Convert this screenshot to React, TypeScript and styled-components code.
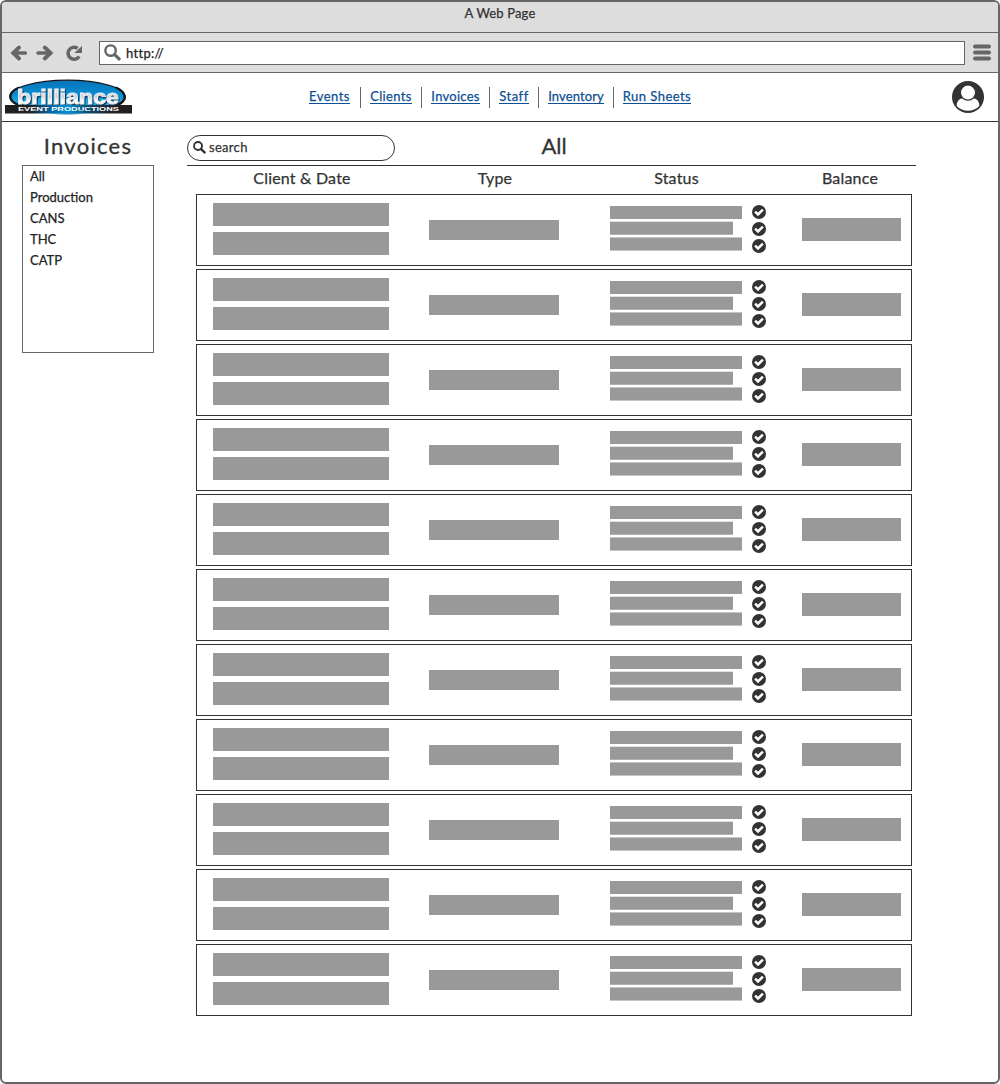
import React from "react";
import styled, { createGlobalStyle } from "styled-components";

const GlobalStyle = createGlobalStyle`
  *, *::before, *::after { box-sizing: border-box; }
  body { margin: 0; background: #fff; }
`;

const Window = styled.div`
  width: 1000px;
  height: 1084px;
  display: flex;
  flex-direction: column;
  border: 2px solid #666;
  border-radius: 6px;
  overflow: hidden;
  background: #fff;
  color: #333;
  font-family: Lato, "Open Sans", sans-serif;
  font-size: 13px;
`;

const TitleBar = styled.div`
  height: 31px;
  flex: none;
  display: flex;
  justify-content: center;
  background: #ddd;
  border-bottom: 1px solid #666;
  line-height: 22px;
`;

const Toolbar = styled.div`
  height: 40px;
  flex: none;
  display: flex;
  align-items: center;
  padding: 0 7px 0 8px;
  background: #ddd;
  border-bottom: 1px solid #666;
`;

const Glyph = styled.svg<{ $gap?: number }>`
  display: block;
  flex: none;
  margin-right: ${(p) => p.$gap ?? 0}px;
`;

const AddressBar = styled.div`
  flex: 1;
  height: 24px;
  display: flex;
  align-items: center;
  margin-right: 8px;
  padding-left: 4px;
  border: 1px solid #666;
  background: #fff;
  color: #222;
`;

const Label = styled.span<{ $size?: number; $spacing?: number }>`
  font-size: ${(p) => p.$size ?? 13}px;
  letter-spacing: ${(p) => p.$spacing ?? 0}px;
  white-space: nowrap;
  -webkit-text-stroke: 0.25px currentColor;
`;

const Header = styled.header`
  height: 49px;
  flex: none;
  display: grid;
  grid-template-columns: 297px 1fr 46px;
  border-bottom: 1px solid #333;
`;

const LogoSlot = styled.div`
  padding: 6px 0 0 3px;
`;

const Nav = styled.nav`
  display: flex;
  padding-top: 14px;
`;

const NavItem = styled.div<{ $width: number }>`
  width: ${(p) => p.$width}px;
  height: 21px;
  display: flex;
  justify-content: center;
  border-right: 1px solid #666;
  &:last-child { border-right: 0; }
`;

const NavLink = styled.a<{ $spacing: number }>`
  height: 17px;
  line-height: 19px;
  border-bottom: 1px solid #0c4f92;
  color: #0c4f92;
  letter-spacing: ${(p) => p.$spacing}px;
  white-space: nowrap;
  text-decoration: none;
  -webkit-text-stroke: 0.25px currentColor;
`;

const Body = styled.main`
  flex: 1;
  display: grid;
  grid-template-columns: 132px 729px;
  column-gap: 33px;
  padding: 13px 0 0 20px;
  align-items: start;
`;

const SectionTitle = styled.h1<{ $spacing: number }>`
  height: 30px;
  margin: 0;
  line-height: 21px;
  font-size: 22px;
  font-weight: 400;
  text-align: center;
  letter-spacing: ${(p) => p.$spacing}px;
  -webkit-text-stroke: 0.3px currentColor;
`;

const FilterList = styled.ul`
  height: 188px;
  margin: 0;
  padding: 0 7px;
  list-style: none;
  border: 1px solid #666;
  color: #222;
`;

const FilterItem = styled.li`
  height: 21px;
  line-height: 21px;
`;

const ListHeader = styled.div`
  height: 31px;
  display: grid;
  grid-template-columns: 208px 318px 1fr;
  border-bottom: 1px solid #333;
`;

const Search = styled.div`
  height: 26px;
  display: flex;
  align-items: center;
  gap: 3px;
  padding: 0 0 2px 5px;
  border: 1px solid #333;
  border-radius: 13px;
`;

const Columns = styled.div`
  height: 28px;
  display: grid;
  grid-template-columns: 230px 156px 207px 1fr;
  line-height: 23px;
  text-align: center;
  & > :last-child { padding-left: 4px; }
`;

const Rows = styled.div`
  display: flex;
  flex-direction: column;
  gap: 3px;
  padding: 0 4px 0 9px;
`;

const InvoiceRow = styled.div`
  height: 72px;
  display: flex;
  padding-left: 16px;
  border: 1px solid #333;
`;

const Stack = styled.div<{ $top: number; $left?: number; $gap?: number }>`
  display: flex;
  flex-direction: column;
  gap: ${(p) => p.$gap ?? 0}px;
  margin-left: ${(p) => p.$left ?? 0}px;
  padding-top: ${(p) => p.$top}px;
`;

const Bar = styled.div<{ $w: number; $h: number }>`
  width: ${(p) => p.$w}px;
  height: ${(p) => p.$h}px;
  background: #999;
`;

const SoftBar = styled(Bar)<{ $top: string; $bottom: string }>`
  border-top: 1px solid ${(p) => p.$top};
  border-bottom: 1px solid ${(p) => p.$bottom};
`;

const LogoName = styled.text`
  font: 700 17px "Liberation Sans", sans-serif;
  filter: drop-shadow(1px 1px 0 #17334f);
`;

const LogoTagline = styled.text`
  font: 700 6px "Liberation Sans", sans-serif;
`;

const Logo = () => (
  <Glyph width="128" height="36" viewBox="0 0 128 36">
    <defs>
      <linearGradient id="disc" x1="0" y1="0" x2="0" y2="1">
        <stop offset="0" stopColor="#0872b8" />
        <stop offset="0.45" stopColor="#0790d2" />
        <stop offset="0.8" stopColor="#24b5ed" />
        <stop offset="1" stopColor="#0784c5" />
      </linearGradient>
      <linearGradient id="strip" x1="0" x2="1">
        <stop offset="0.2" stopColor="#211e22" />
        <stop offset="0.34" stopColor="#076096" />
        <stop offset="0.5" stopColor="#0090d4" />
        <stop offset="0.66" stopColor="#0f4a70" />
        <stop offset="0.84" stopColor="#211e22" />
      </linearGradient>
      <linearGradient id="chrome" x1="0" y1="0" x2="0" y2="1">
        <stop offset="0" stopColor="#fff" />
        <stop offset="0.5" stopColor="#c9cfda" />
        <stop offset="0.7" stopColor="#fff" />
        <stop offset="1" stopColor="#e0e4ea" />
      </linearGradient>
    </defs>
    <ellipse cx="62.5" cy="17.5" rx="57.5" ry="16.3" fill="url(#disc)" stroke="#15151b" strokeWidth="1.2" />
    <path d="M14 8.5Q4 13 5.5 19Q7 24 14 26M111 8.5Q121 13 119.5 20Q117 25 110 27" fill="none" stroke="#15151b" strokeWidth="2.4" />
    <g transform="translate(0 -6.2) scale(1 1.24)">
      <LogoName x="12" y="25" textLength="102" lengthAdjust="spacingAndGlyphs" fill="url(#chrome)" stroke="#eef0f4" strokeWidth="0.8">brilliance</LogoName>
    </g>
    <rect x="0" y="26" width="127" height="8.5" fill="url(#strip)" />
    <LogoTagline x="13" y="32.4" textLength="101" lengthAdjust="spacingAndGlyphs" fill="#fff">EVENT PRODUCTIONS</LogoTagline>
    <path d="M43 34.5Q62 36.5 82 34.5Z" fill="#047ebd" />
  </Glyph>
);

const Back = () => (
  <Glyph $gap={8} width="18" height="16" viewBox="0 0 18 16" fill="none" stroke="#666" strokeLinecap="round">
    <path d="M15.3 8H5" strokeWidth="3.6" />
    <path d="M9 2.5L3.2 8L9 13.5" strokeWidth="3.8" strokeLinejoin="miter" />
  </Glyph>
);

const Forward = () => (
  <Glyph $gap={11} width="18" height="16" viewBox="0 0 18 16" fill="none" stroke="#666" strokeLinecap="round">
    <path d="M2 8H13" strokeWidth="3.6" />
    <path d="M8.8 2.5L14.6 8L8.8 13.5" strokeWidth="3.8" strokeLinejoin="miter" />
  </Glyph>
);

const Reload = () => (
  <Glyph $gap={16} width="18" height="16" viewBox="0 0 18 16">
    <path d="M14.2 11.4A6 6 0 1 1 12.6 3.4" fill="none" stroke="#666" strokeWidth="3.5" />
    <path d="M17 1V8H9.4L12 5.6Z" fill="#666" />
  </Glyph>
);

const Lens = ({ size, color, gap = 0 }: { size: number; color: string; gap?: number }) => (
  <Glyph $gap={gap} width={size} height={size} viewBox="0 0 16 16" fill="none" stroke={color}>
    <circle cx="6.2" cy="6.2" r="4.9" strokeWidth="2.3" />
    <path d="M10 10L14.2 14.1" strokeWidth="3" strokeLinecap="round" />
  </Glyph>
);

const Menu = () => (
  <Glyph width="18" height="17" viewBox="0 0 18 17" stroke="#666" strokeWidth="4" strokeLinecap="round">
    <path d="M2 2.5H16M2 8.5H16M2 14.5H16" />
  </Glyph>
);

const Avatar = () => (
  <Glyph width="32" height="32" viewBox="0 0 32 32">
    <circle cx="16" cy="16" r="16" fill="#333" />
    <path d="M4.6 25Q5 17.6 10.5 17.2Q16 21.5 21.5 17.2Q27 17.6 27.4 25Q22.8 29.7 16 29.7Q9.2 29.7 4.6 25Z" fill="#fff" />
    <circle cx="16" cy="11.6" r="7.6" fill="#fff" stroke="#333" strokeWidth="1.2" />
  </Glyph>
);

const AvatarSlot = styled.div`
  padding-top: 8px;
`;

const Check = () => (
  <Glyph width="14" height="14" viewBox="0 0 14 14">
    <circle cx="7" cy="7" r="7" fill="#333" />
    <path d="M3.1 6.7L6 9.5L10.9 4.7" fill="none" stroke="#fff" strokeWidth="2.5" />
  </Glyph>
);

const links = [
  { text: "Events", width: 62, spacing: 0.45 },
  { text: "Clients", width: 61, spacing: 0.35 },
  { text: "Invoices", width: 68, spacing: 0.25 },
  { text: "Staff", width: 49, spacing: 0.5 },
  { text: "Inventory", width: 75, spacing: 0.1 },
  { text: "Run Sheets", width: 86, spacing: 0.45 },
];

const filters = ["All", "Production", "CANS", "THC", "CATP"];
const columns = ["Client & Date", "Type", "Status", "Balance"];

export default function App() {
  return (
    <>
      <GlobalStyle />
      <Window>
        <TitleBar><Label $spacing={0.15}>A Web Page</Label></TitleBar>
        <Toolbar>
          <Back />
          <Forward />
          <Reload />
          <AddressBar>
            <Lens size={17} color="#666" gap={5} />
            <Label $spacing={0.3}>http://</Label>
          </AddressBar>
          <Menu />
        </Toolbar>
        <Header>
          <LogoSlot><Logo /></LogoSlot>
          <Nav>
            {links.map((l) => (
              <NavItem key={l.text} $width={l.width}>
                <NavLink $spacing={l.spacing}>{l.text}</NavLink>
              </NavItem>
            ))}
          </Nav>
          <AvatarSlot><Avatar /></AvatarSlot>
        </Header>
        <Body>
          <aside>
            <SectionTitle $spacing={1.3}>Invoices</SectionTitle>
            <FilterList>
              {filters.map((f) => <FilterItem key={f}><Label>{f}</Label></FilterItem>)}
            </FilterList>
          </aside>
          <section>
            <ListHeader>
              <Search>
                <Lens size={13} color="#333" />
                <Label $spacing={0.3}>search</Label>
              </Search>
              <SectionTitle $spacing={0}>All</SectionTitle>
            </ListHeader>
            <Columns>
              {columns.map((c) => <Label key={c} $size={16} $spacing={0.2}>{c}</Label>)}
            </Columns>
            <Rows>
              {Array.from({ length: 11 }, (_, i) => (
                <InvoiceRow key={i}>
                  <Stack $top={8} $gap={6}>
                    <Bar $w={176} $h={23} />
                    <Bar $w={176} $h={23} />
                  </Stack>
                  <Stack $top={25} $left={40}><Bar $w={130} $h={20} /></Stack>
                  <Stack $top={11} $left={51} $gap={2}>
                    <Bar $w={132} $h={13} />
                    <SoftBar $w={123} $h={14} $top="#e0e0e0" $bottom="#b0b0b0" />
                    <SoftBar $w={132} $h={14} $top="#c4c4c4" $bottom="#c4c4c4" />
                  </Stack>
                  <Stack $top={10} $left={10} $gap={3}>
                    <Check />
                    <Check />
                    <Check />
                  </Stack>
                  <Stack $top={23} $left={36}><Bar $w={99} $h={23} /></Stack>
                </InvoiceRow>
              ))}
            </Rows>
          </section>
        </Body>
      </Window>
    </>
  );
}
